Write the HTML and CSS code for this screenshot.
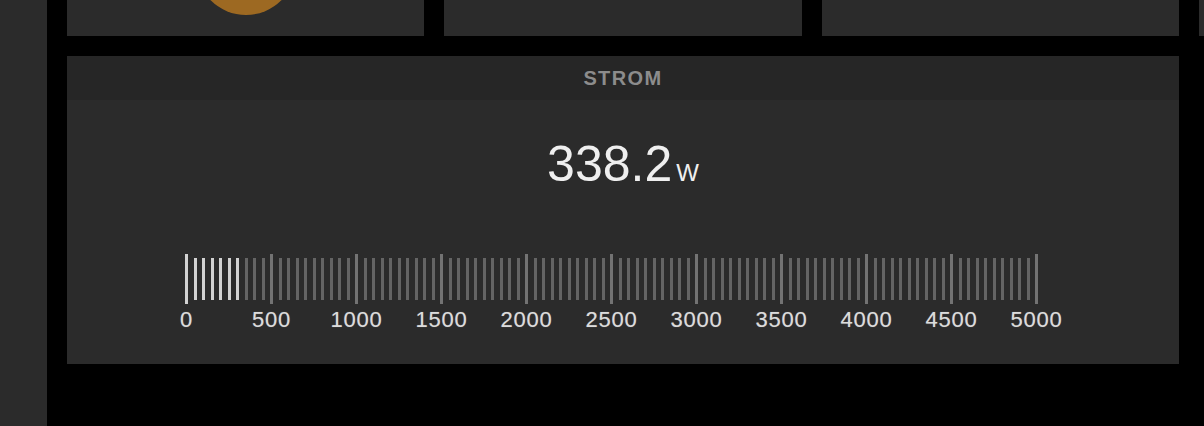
FILE: index.html
```html
<!DOCTYPE html>
<html lang="de">
<head>
    <meta charset="UTF-8">
    <meta name="viewport" content="width=device-width, initial-scale=1.0">
    <title>Strom</title>
    <link rel="stylesheet" href="styles.css">
</head>
<body>
    <!-- Sidebar -->
    <aside class="sidebar"></aside>

    <main class="dashboard">
        <!-- Top row of tiles (scrolled partly out of view) -->
        <div class="tile">
            <div class="dot"></div>
        </div>
        <div class="tile"></div>
        <div class="tile"></div>
        <div class="tile"></div>

        <!-- Power tile -->
        <section class="tile power">
            <header class="tile-title">STROM</header>
            <div class="tile-body">
                <p class="reading">338.2<span class="unit">W</span></p>
                <div class="scale">
                    <div class="ticks" id="ticks"></div>
                    <div class="labels" id="labels"></div>
                </div>
            </div>
        </section>
    </main>

    <script>
        const value = 338.2;
        const max = 5000;
        const step = 50;
        const ticks = document.getElementById('ticks');
        const labels = document.getElementById('labels');

        // One tick every 50 W, a long one every 500 W
        for (let v = 0; v <= max; v += step) {
            const tick = document.createElement('span');
            tick.className = 'tick';
            if (v % 500 === 0) tick.classList.add('major');
            if (v <= value) tick.classList.add('on');
            ticks.appendChild(tick);
        }

        for (let v = 0; v <= max; v += 500) {
            const label = document.createElement('span');
            label.textContent = v;
            labels.appendChild(label);
        }
    </script>
</body>
</html>
```

FILE: styles.css
```css
/* Page */
body {
    margin: 0;
    height: 100vh;
    overflow: hidden;
    display: flex;
    background-color: #000;
    font-family: "Liberation Sans", Arial, sans-serif;
    color: #eee;
}

/* Left navigation strip */
.sidebar {
    width: 47px;
    flex-shrink: 0;
    background-color: #2b2b2b;
}

/* Tile grid */
.dashboard {
    flex: 1;
    min-width: 0;
    overflow: hidden;
    padding-left: 20px;
    display: grid;
    grid-template-columns: repeat(3, 357.33px) 1fr;
    grid-template-rows: 36px 308px;
    gap: 20px;
    align-content: start;
}

.tile {
    background-color: #2b2b2b;
    overflow: hidden;
}

/* Orange status dot of the first tile */
.dot {
    width: 100px;
    height: 100px;
    margin: -85px auto 0;
    border-radius: 50%;
    background-color: #9d6922;
}

/* Power tile */
.power {
    grid-column: 1 / span 3;
    display: flex;
    flex-direction: column;
}

.tile-title {
    height: 44px;
    line-height: 44px;
    text-align: center;
    font-size: 20px;
    font-weight: bold;
    letter-spacing: 1.4px;
    color: #8c8c8c;
    background-color: #262626;
}

.tile-body {
    padding: 34px 0 32px;
}

.reading {
    margin: 0;
    height: 60px;
    line-height: 60px;
    text-align: center;
    font-size: 50px;
    color: #efefef;
}

.unit {
    margin-left: 4px;
    font-size: 24px;
}

/* Scale with ticks */
.scale {
    margin: 60px 0 0 77px;
}

.ticks {
    width: 853px;
    height: 50px;
    margin-left: 41px;
    display: flex;
    justify-content: space-between;
    align-items: center;
}

.tick {
    width: 3px;
    height: 42px;
    background-color: #646464;
}

.tick.major {
    height: 50px;
    background-color: #737373;
}

.tick.on {
    background-color: #d2d2d2;
}

.labels {
    margin-top: 4px;
    display: flex;
}

.labels span {
    width: 85px;
    flex-shrink: 0;
    text-align: center;
    font-size: 22px;
    line-height: 24px;
    letter-spacing: 0.8px;
    color: #dcdcdc;
    text-shadow: 0 0 1px rgba(255, 255, 255, 0.4);
}
```
